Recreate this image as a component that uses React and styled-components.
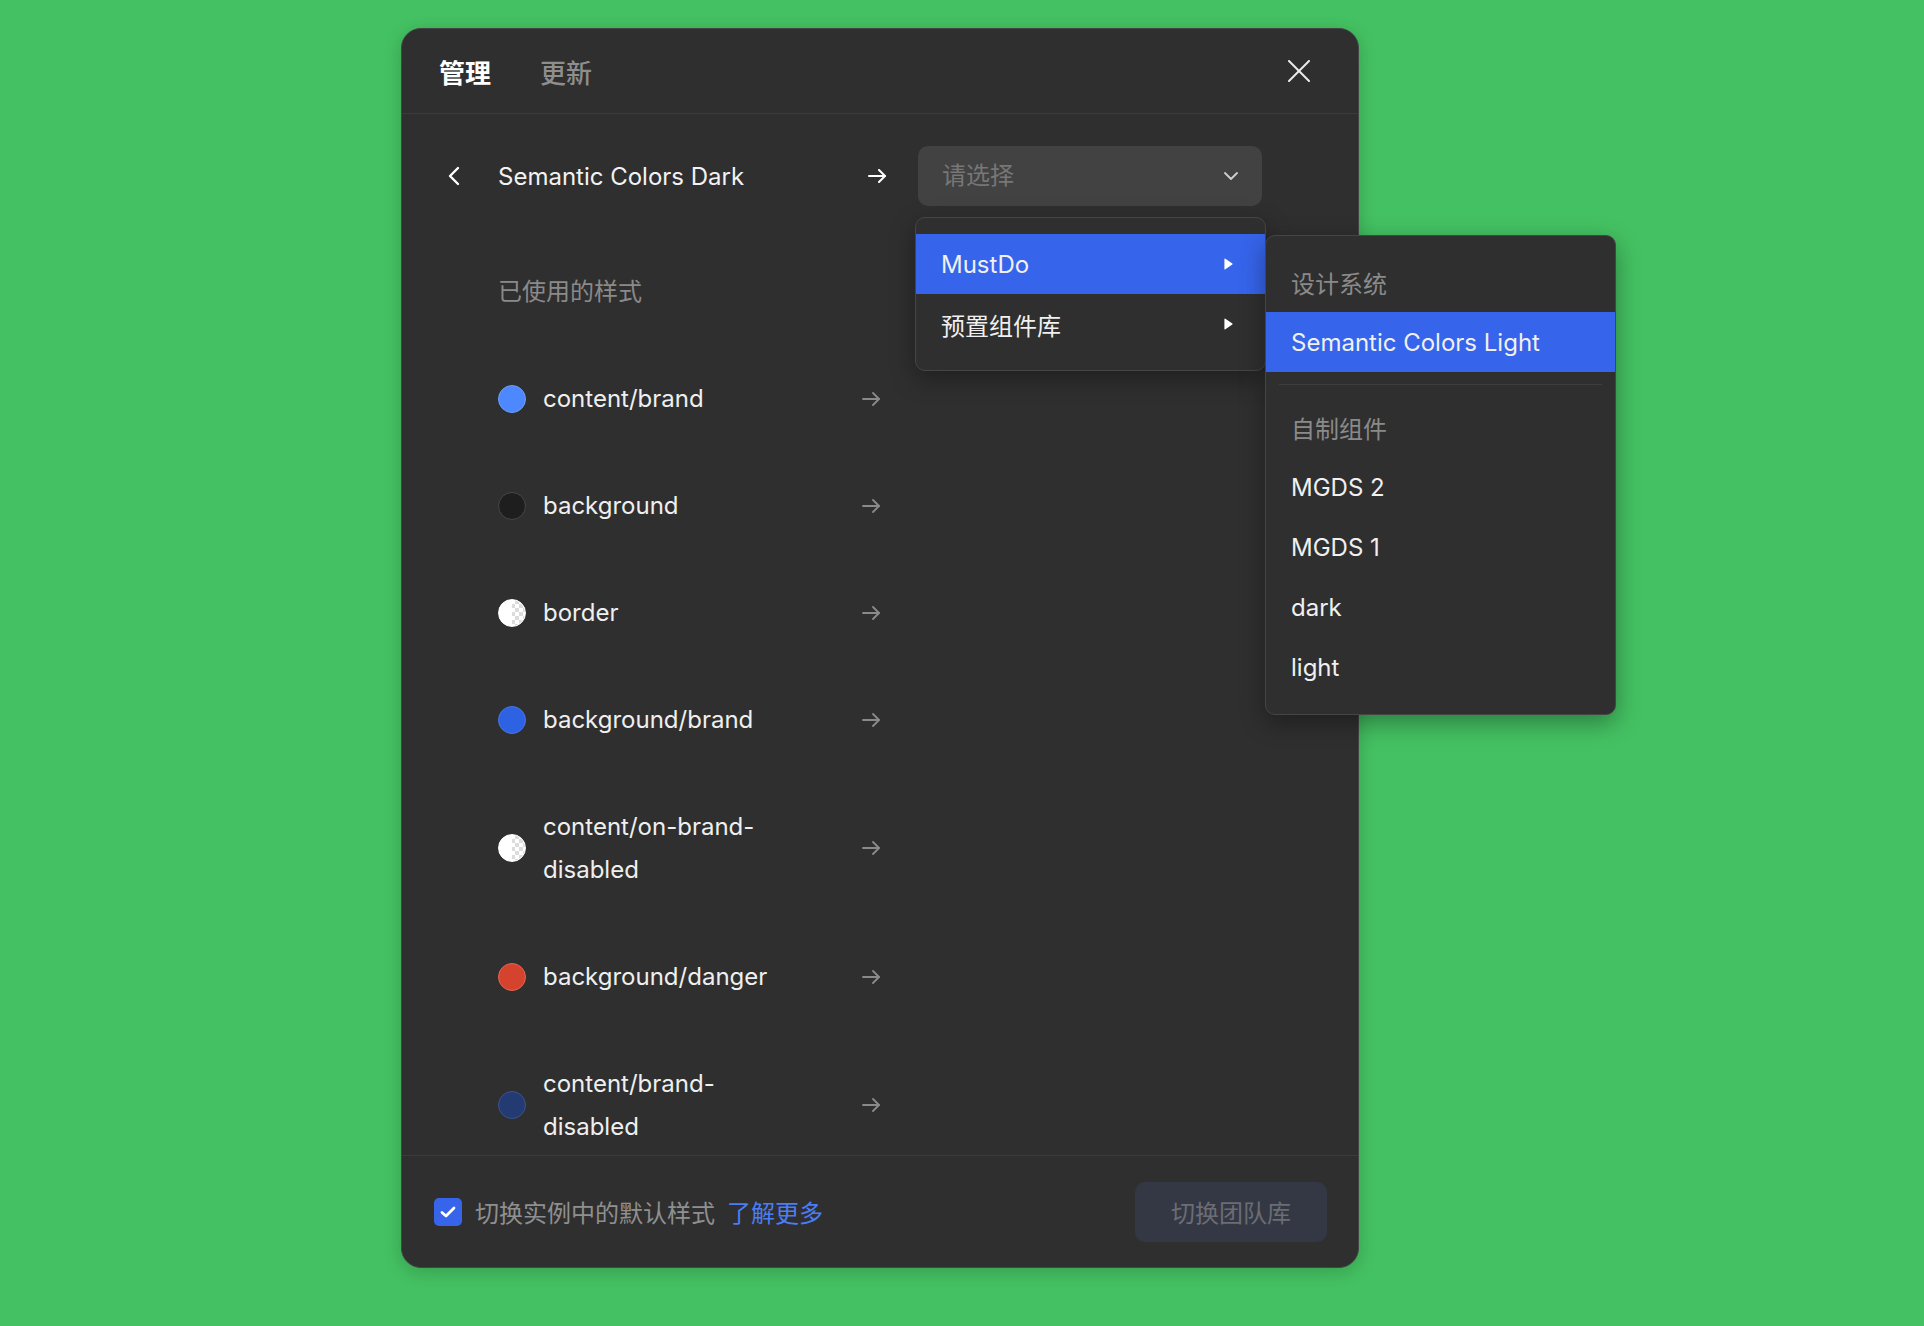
import React from 'react';
import styled, { createGlobalStyle } from 'styled-components';

const GlobalStyle = createGlobalStyle`
  body {
    margin: 0;
    background: #44c162;
  }
`;

const FONT = `Inter, "Noto Sans CJK SC", sans-serif`;

const Page = styled.div`
  min-height: 100vh;
  box-sizing: border-box;
  padding: 28px 0 0 401px;
  font-family: ${FONT};
`;

const Dialog = styled.div`
  width: 958px;
  height: 1240px;
  box-sizing: border-box;
  display: flex;
  flex-direction: column;
  background: #2f2f2f;
  border: 1px solid #434343;
  border-radius: 20px;
  box-shadow: 0 4px 18px rgba(0, 0, 0, 0.18);
`;

const Header = styled.div`
  height: 85px;
  box-sizing: border-box;
  display: flex;
  align-items: center;
  gap: 49px;
  padding: 0 47px 0 37px;
  border-bottom: 1px solid #3b3b3b;
`;

const Tab = styled.span`
  font-size: 26px;
  font-weight: ${(p) => (p.$active ? 700 : 500)};
  color: ${(p) => (p.$active ? '#ffffff' : '#8e8e8e')};
`;

const CloseButton = styled.button`
  margin-left: auto;
  width: 24px;
  height: 24px;
  padding: 0;
  border: none;
  background: none;
  display: flex;
  align-items: center;
  justify-content: center;
  cursor: pointer;
`;

const Body = styled.div`
  flex: 1;
  min-height: 0;
  display: flex;
  flex-direction: column;
  padding: 32px 0 0 45px;
`;

const TopRow = styled.div`
  display: flex;
  align-items: center;
  gap: 32px;
  height: 60px;
  flex: none;
  position: relative;
  z-index: 2;
`;

const Nav = styled.div`
  width: 439px;
  display: flex;
  align-items: center;
`;

const BackButton = styled.div`
  width: 51px;
  display: flex;
  align-items: center;
`;

const Title = styled.div`
  flex: 1;
  font-size: 24px;
  color: #f2f2f2;
`;

const SelectWrap = styled.div`
  position: relative;
  width: 344px;
`;

const Select = styled.div`
  height: 60px;
  box-sizing: border-box;
  padding: 0 24px;
  display: flex;
  align-items: center;
  justify-content: space-between;
  background: #424242;
  border-radius: 10px;
  font-size: 24px;
  line-height: 1;
  color: #777777;
`;

const Menu = styled.div`
  position: absolute;
  top: 71px;
  left: -3px;
  width: 351px;
  box-sizing: border-box;
  padding: 16px 0;
  background: #2f2f2f;
  border: 1px solid #454545;
  border-radius: 10px;
  box-shadow: 0 8px 24px rgba(0, 0, 0, 0.35);
`;

const SubMenu = styled(Menu)`
  top: 17px;
  left: 100%;
  padding: 16px 0 17px;
`;

const MenuItem = styled.div`
  height: 60px;
  box-sizing: border-box;
  display: flex;
  align-items: center;
  justify-content: space-between;
  padding: 0 32px 0 25px;
  font-size: 24px;
  color: ${(p) => (p.$muted ? '#8a8a8a' : '#f0f0f0')};
  background: ${(p) => (p.$active ? '#3664ea' : 'transparent')};
`;

const MenuDivider = styled.div`
  height: 1px;
  margin: 12px 13px;
  background: #3e3e3e;
`;

const SectionLabel = styled.div`
  flex: none;
  margin-top: 32px;
  padding: 32px 0 32px 51px;
  line-height: 43px;
  font-size: 24px;
  color: #8a8a8a;
`;

const List = styled.div`
  flex: 1;
  min-height: 0;
  overflow: hidden;
  width: 382px;
  padding-left: 51px;
`;

const Row = styled.div`
  display: flex;
  align-items: center;
  padding: 32px 0;
`;

const Swatch = styled.span`
  flex: none;
  width: 28px;
  height: 28px;
  box-sizing: border-box;
  border-radius: 50%;
  border: 1.5px solid ${(p) => p.$ring};
  background: ${(p) =>
    p.$alpha
      ? `linear-gradient(to right, ${p.$color} 50%, transparent 50%),
         repeating-conic-gradient(#ffffff 0 25%, #dcdcdc 0 50%) 0 0 / 8px 8px`
      : p.$color};
`;

const Name = styled.span`
  width: 248px;
  margin-left: 17px;
  font-size: 24px;
  line-height: 43px;
  color: #efefef;
  overflow-wrap: break-word;
`;

const RowArrow = styled.span`
  margin-left: auto;
  display: flex;
`;

const Footer = styled.div`
  height: 112px;
  flex: none;
  box-sizing: border-box;
  display: flex;
  align-items: center;
  padding: 0 31px 0 32px;
  border-top: 1px solid #3b3b3b;
`;

const Checkbox = styled.span`
  width: 28px;
  height: 28px;
  border-radius: 5px;
  background: #3664ea;
  display: flex;
  align-items: center;
  justify-content: center;
`;

const FooterText = styled.span`
  margin-left: 13px;
  font-size: 24px;
  color: #8f8f8f;
`;

const LearnMore = styled.a`
  margin-left: 12px;
  font-size: 24px;
  color: #4a7ef5;
  text-decoration: none;
`;

const SwitchButton = styled.button`
  margin-left: auto;
  width: 192px;
  height: 60px;
  border: none;
  border-radius: 10px;
  background: #343845;
  font-family: ${FONT};
  font-size: 24px;
  color: #6b6d73;
`;

const ArrowRight = ({ color = '#ffffff', width = 2 }) => (
  <svg width="18" height="14" viewBox="0 0 18 14" fill="none" stroke={color} strokeWidth={width} strokeLinecap="round" strokeLinejoin="round">
    <line x1="1" y1="7" x2="17" y2="7" />
    <polyline points="11,1 17,7 11,13" />
  </svg>
);

const Caret = () => (
  <svg width="9" height="12" viewBox="0 0 9 12">
    <path d="M1 1.2 L8 6 L1 10.8 Z" fill="#ffffff" stroke="#ffffff" strokeWidth="1.2" strokeLinejoin="round" />
  </svg>
);

const styles = [
  { name: 'content/brand', color: '#4d88ff', ring: '#6b9cff' },
  { name: 'background', color: '#1e1e1e', ring: '#474747' },
  { name: 'border', color: '#ffffff', ring: '#ffffff', alpha: true },
  { name: 'background/brand', color: '#2d62e3', ring: '#4676ea' },
  { name: 'content/on-brand-disabled', color: '#ffffff', ring: '#ffffff', alpha: true },
  { name: 'background/danger', color: '#d5432f', ring: '#e4654f' },
  { name: 'content/brand-disabled', color: '#243a72', ring: '#3b5290' },
];

const customLibs = ['MGDS 2', 'MGDS 1', 'dark', 'light'];

export default function App() {
  return (
    <Page>
      <GlobalStyle />
      <Dialog>
        <Header>
          <Tab $active>管理</Tab>
          <Tab>更新</Tab>
          <CloseButton>
            <svg width="22" height="22" viewBox="0 0 22 22" stroke="#ececec" strokeWidth="2" strokeLinecap="round">
              <line x1="1" y1="1" x2="21" y2="21" />
              <line x1="21" y1="1" x2="1" y2="21" />
            </svg>
          </CloseButton>
        </Header>

        <Body>
          <TopRow>
            <Nav>
              <BackButton>
                <svg width="13" height="20" viewBox="0 0 13 20" fill="none" stroke="#ffffff" strokeWidth="2.4" strokeLinecap="round" strokeLinejoin="round">
                  <polyline points="11,2 3,10 11,18" />
                </svg>
              </BackButton>
              <Title>Semantic Colors Dark</Title>
              <ArrowRight />
            </Nav>
            <SelectWrap>
              <Select>
                请选择
                <svg width="14" height="8" viewBox="0 0 14 8" fill="none" stroke="#cfcfcf" strokeWidth="1.8" strokeLinecap="round" strokeLinejoin="round">
                  <polyline points="1,1 7,7 13,1" />
                </svg>
              </Select>
              <Menu>
                <MenuItem $active>
                  MustDo
                  <Caret />
                </MenuItem>
                <MenuItem>
                  预置组件库
                  <Caret />
                </MenuItem>
                <SubMenu>
                  <MenuItem $muted>设计系统</MenuItem>
                  <MenuItem $active>Semantic Colors Light</MenuItem>
                  <MenuDivider />
                  <MenuItem $muted>自制组件</MenuItem>
                  {customLibs.map((lib) => (
                    <MenuItem key={lib}>{lib}</MenuItem>
                  ))}
                </SubMenu>
              </Menu>
            </SelectWrap>
          </TopRow>

          <SectionLabel>已使用的样式</SectionLabel>
          <List>
            {styles.map((s) => (
              <Row key={s.name}>
                <Swatch $color={s.color} $ring={s.ring} $alpha={s.alpha} />
                <Name>{s.name}</Name>
                <RowArrow>
                  <ArrowRight color="#8a8a8a" width={1.8} />
                </RowArrow>
              </Row>
            ))}
          </List>
        </Body>

        <Footer>
          <Checkbox>
            <svg width="16" height="12" viewBox="0 0 16 12" fill="none" stroke="#ffffff" strokeWidth="2.8" strokeLinecap="round" strokeLinejoin="round">
              <polyline points="2,6.5 6,10 14,2" />
            </svg>
          </Checkbox>
          <FooterText>切换实例中的默认样式</FooterText>
          <LearnMore href="#">了解更多</LearnMore>
          <SwitchButton>切换团队库</SwitchButton>
        </Footer>
      </Dialog>
    </Page>
  );
}
